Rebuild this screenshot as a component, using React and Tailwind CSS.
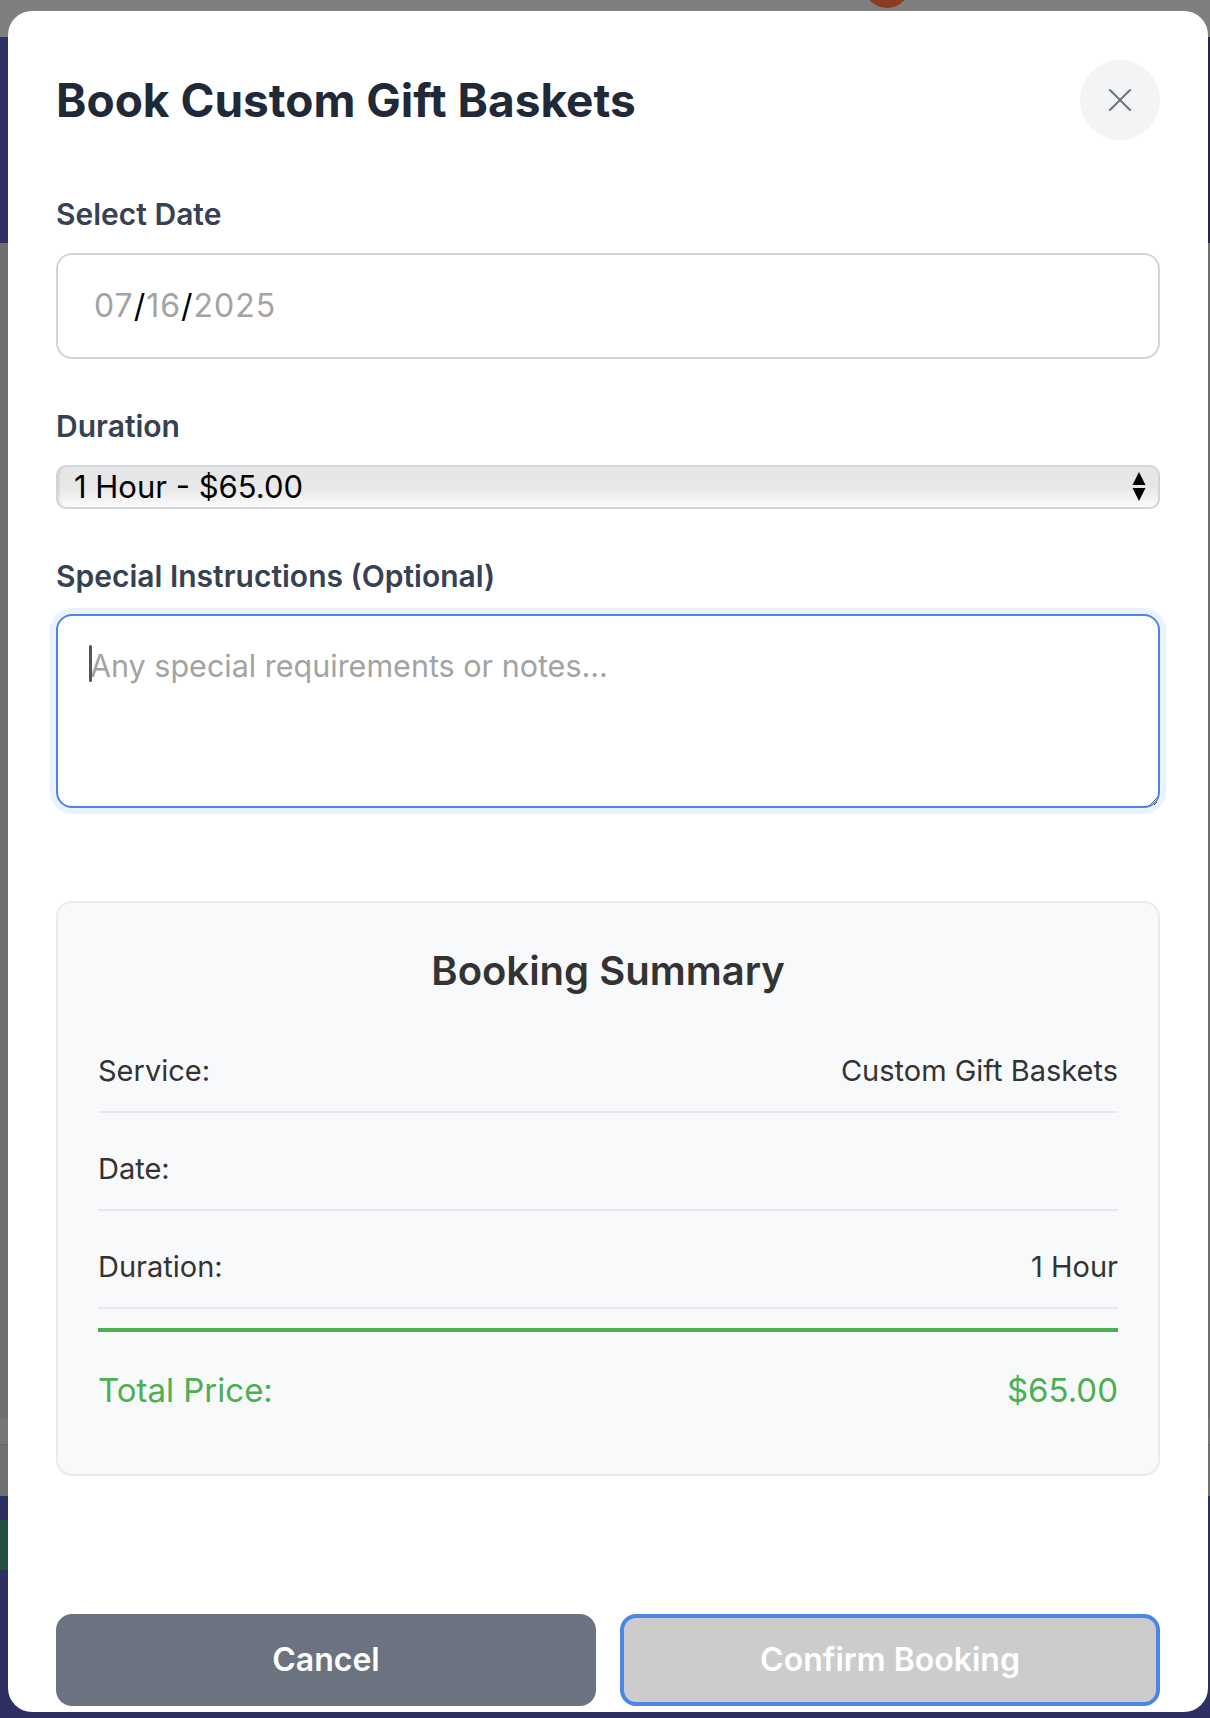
export default function App() {
  const rows = [
    { label: "Service:", value: "Custom Gift Baskets" },
    { label: "Date:", value: "" },
    { label: "Duration:", value: "1 Hour" },
  ];
  return (
    <div className="relative h-[1718px] w-full overflow-hidden bg-[#6f6f6f] font-[Inter,sans-serif]">
      {/* dimmed page behind the overlay */}
      <div className="flex h-full flex-col">
        <div className="flex h-[37px] bg-[#7f7f7f]">
          <div className="ml-[864px] -mt-[38px] h-[46px] w-[46px] rounded-full bg-[#8b3b1f]" />
        </div>
        <div className="h-[206px] bg-linear-to-r from-[#2f3266] to-[#2b2351]" />
        <div className="h-[1175px] bg-[#6f6f6f]" />
        <div className="h-[27px] border-b border-[#686868] bg-[#767676]" />
        <div className="h-[51px] bg-[#707070]" />
        <div className="flex-1 bg-[#2e3061]">
          <div className="mt-[24px] -ml-[20px] h-[50px] w-[50px] rounded-full bg-[#24503e]" />
        </div>
      </div>

      {/* modal */}
      <div className="absolute left-[8px] top-[11px] flex h-[1701px] w-[1200px] flex-col overflow-hidden rounded-[24px] bg-white px-[48px] pt-[49px]">
        <div className="flex h-[80px] shrink-0 items-center justify-between">
          <h2 className="text-[46px] font-bold leading-[56px] text-[#1f2937]">
            Book Custom Gift Baskets
          </h2>
          <button className="flex h-[80px] w-[80px] items-center justify-center rounded-full bg-[#f3f4f6]">
            <svg width="40" height="40" viewBox="0 0 40 40" fill="none">
              <path d="M10 10L30 30M30 10L10 30" stroke="#6b7280" strokeWidth="2" strokeLinecap="round" />
            </svg>
          </button>
        </div>

        <label className="mt-[54px] mb-[19px] block text-[30px] font-semibold leading-[40px] text-[#374151]">
          Select Date
        </label>
        <div className="flex h-[106px] shrink-0 items-center rounded-[16px] border-2 border-[#d1d5db] pl-[36px] text-[32px] leading-[48px] tracking-[1px]">
          <span className="text-[#a3a3a3]">07</span>
          <span className="text-black">/</span>
          <span className="text-[#a3a3a3]">16</span>
          <span className="text-black">/</span>
          <span className="text-[#a3a3a3]">2025</span>
        </div>

        <label className="mt-[47px] mb-[19px] block text-[30px] font-semibold leading-[40px] text-[#374151]">
          Duration
        </label>
        <div className="flex h-[44px] shrink-0 items-center justify-between rounded-[10px] border-2 border-[#d1d5db] bg-linear-to-b from-[#e7e7e7] from-50% to-[#fbfbfb] pl-[16px] pr-[12px] shadow-[inset_3px_0_3px_-2px_rgba(0,0,0,0.12)]">
          <span className="text-[31px] leading-[40px] text-black">1 Hour - $65.00</span>
          <svg width="14" height="30" viewBox="0 0 14 30">
            <path d="M7 0L13.5 13H0.5Z" fill="#000" />
            <path d="M7 29L13.5 16H0.5Z" fill="#000" />
          </svg>
        </div>

        <label className="mt-[47px] mb-[18px] block text-[30px] font-semibold leading-[40px] text-[#374151]">
          Special Instructions (Optional)
        </label>
        <div className="relative h-[194px] shrink-0">
          <textarea
            readOnly
            placeholder="Any special requirements or notes..."
            className="h-full w-full rounded-[16px] border-2 border-[#4a86e8] px-[32px] pt-[26px] text-[30.5px] leading-[48px] text-black outline-none ring-[6px] ring-[#ebf2fe] placeholder:text-[#a3a3a3]"
          />
          <span className="absolute left-[33px] top-[31px] h-[37px] w-[3px] rounded-sm bg-[#555]" />
        </div>

        <div className="mt-[93px] shrink-0 rounded-[16px] border-2 border-[#e8eaed] bg-[#f8f9fa] px-[40px] pt-[40px] pb-[40px]">
          <h3 className="mb-[32px] text-center text-[40px] font-semibold leading-[56px] text-[#333333]">
            Booking Summary
          </h3>
          <div className="flex flex-col">
            {rows.map((r) => (
              <div
                key={r.label}
                className="mb-[16px] flex items-center justify-between border-b-2 border-[#e6e8eb] py-[20px] text-[29px] leading-[40px] text-[#333333]"
              >
                <span>{r.label}</span>
                <span>{r.value}</span>
              </div>
            ))}
            <div className="mt-[3px] flex items-center justify-between border-t-4 border-[#4caf50] pt-[30px] pb-[16px] text-[33px] leading-[56px] text-[#4caf50]">
              <span>Total Price:</span>
              <span>$65.00</span>
            </div>
          </div>
        </div>

        <div className="mt-[138px] grid shrink-0 grid-cols-2 gap-[24px]">
          <button className="flex h-[92px] items-center justify-center rounded-[16px] bg-[#6b7280] text-[32px] font-semibold text-white">
            Cancel
          </button>
          <button className="flex h-[92px] items-center justify-center rounded-[16px] border-4 border-[#4a86e8] bg-[#cccccc] text-[32px] font-semibold text-white">
            Confirm Booking
          </button>
        </div>
      </div>
    </div>
  );
}
